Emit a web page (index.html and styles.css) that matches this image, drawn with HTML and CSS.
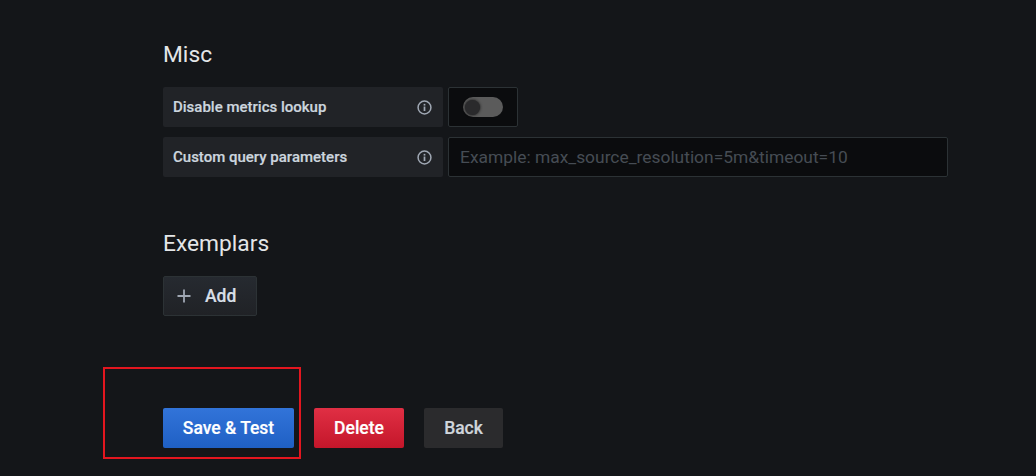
FILE: index.html
```html
<!DOCTYPE html>
<html lang="en">
<head>
<meta charset="utf-8">
<title>Data source settings</title>
<link rel="stylesheet" href="styles.css">
</head>
<body>
<main class="page">
  <h3 class="heading heading-misc">Misc</h3>
  <div class="row">
    <div class="label"><span>Disable metrics lookup</span>
      <svg class="info" viewBox="0 0 14 14" width="15" height="15"><circle cx="7" cy="7" r="6" fill="none" stroke="currentColor" stroke-width="1.4"/><rect x="6.2" y="6.1" width="1.6" height="4.2" fill="currentColor"/><rect x="6.2" y="3.6" width="1.6" height="1.6" fill="currentColor"/></svg>
    </div>
    <div class="switch-box"><span class="switch"><span class="knob"></span></span></div>
  </div>
  <div class="row">
    <div class="label"><span>Custom query parameters</span>
      <svg class="info" viewBox="0 0 14 14" width="15" height="15"><circle cx="7" cy="7" r="6" fill="none" stroke="currentColor" stroke-width="1.4"/><rect x="6.2" y="6.1" width="1.6" height="4.2" fill="currentColor"/><rect x="6.2" y="3.6" width="1.6" height="1.6" fill="currentColor"/></svg>
    </div>
    <input class="input" type="text" placeholder="Example: max_source_resolution=5m&amp;timeout=10">
  </div>
  <h3 class="heading heading-ex">Exemplars</h3>
  <button class="btn btn-add" type="button">
    <svg class="plus" viewBox="0 0 14 14" width="14" height="14"><path d="M7 0.5v13M0.5 7h13" stroke="currentColor" stroke-width="1.8" fill="none"/></svg>
    <span>Add</span>
  </button>
  <div class="actions">
    <button class="btn btn-primary" type="button">Save &amp; Test</button>
    <button class="btn btn-danger" type="button">Delete</button>
    <button class="btn btn-back" type="button">Back</button>
  </div>
</main>
<div class="annotation"></div>
</body>
</html>
```
FILE: styles.css
```css
* { box-sizing: border-box; }
html, body { margin: 0; height: 100%; }
body {
  background: #141619;
  color: #d8d9da;
  font-family: Roboto, "Liberation Sans", sans-serif;
  overflow: hidden;
  position: relative;
}
.page {
  padding: 41px 0 0 163px;
  display: flex;
  flex-direction: column;
  align-items: flex-start;
}
.heading {
  margin: 0;
  font-size: 22.75px;
  font-weight: 400;
  line-height: 28px;
  color: #e4e6e8;
}
.heading-misc { margin-bottom: 18px; }
.heading-ex { margin-bottom: 18px; }
.row {
  display: flex;
  gap: 5px;
  height: 40px;
  margin-bottom: 10px;
}
.row + .heading-ex { margin-top: 43px; }
.label {
  width: 280px;
  height: 40px;
  background: #212327;
  border-radius: 2px;
  padding: 0 11px 0 10px;
  display: flex;
  align-items: center;
  justify-content: space-between;
  font-size: 15px;
  font-weight: 500;
  color: #ccd5de;
  -webkit-text-stroke: 0.2px currentColor;
}
.info { color: #9fa7b3; flex: none; }
.switch-box {
  width: 70px;
  height: 40px;
  background: #0b0c0e;
  border: 1px solid #2c3235;
  border-radius: 2px;
  display: flex;
  align-items: center;
  justify-content: center;
}
.switch {
  width: 40px;
  height: 20px;
  border-radius: 10px;
  background: #5b5b5b;
  display: flex;
  align-items: center;
  padding-left: 2px;
}
.knob {
  width: 15px;
  height: 15px;
  border-radius: 50%;
  background: #2a2a2c;
  box-shadow: 0 0 3px #111;
}
.input {
  width: 500px;
  height: 40px;
  background: #0b0c0e;
  border: 1px solid #2c3235;
  border-radius: 2px;
  padding: 0 11px;
  font: 400 17.4px Roboto, "Liberation Sans", sans-serif;
  color: #d8d9da;
  outline: none;
}
.input::placeholder { color: #464c54; opacity: 1; }
.btn {
  height: 40px;
  border-radius: 2px;
  border: 0;
  font: 500 17.5px Roboto, "Liberation Sans", sans-serif;
  display: inline-flex;
  align-items: center;
  justify-content: center;
  padding: 0 0 1px;
  -webkit-text-stroke: 0.2px currentColor;
}
.btn-add {
  width: 94px;
  background: linear-gradient(#262a30, #202226);
  border: 1px solid #2c3235;
  color: #d8dfe6;
  gap: 14px;
  justify-content: flex-start;
  padding-left: 13px;
}
.plus { color: #9fa7b3; margin-top: 1px; }
.actions {
  display: flex;
  margin-top: 92px;
}
.btn-primary {
  width: 131px;
  margin-right: 20px;
  color: #fff;
  background: linear-gradient(#3274d9, #1f60c4);
}
.btn-danger {
  width: 90px;
  margin-right: 20px;
  color: #fff;
  background: linear-gradient(#e02f44, #c4162a);
}
.btn-back {
  width: 79px;
  color: #d0d6dc;
  background: #2b2b2d;
}
.annotation {
  position: absolute;
  left: 103px;
  top: 367px;
  width: 198px;
  height: 92px;
  border: 2px solid #e3161f;
}
```
